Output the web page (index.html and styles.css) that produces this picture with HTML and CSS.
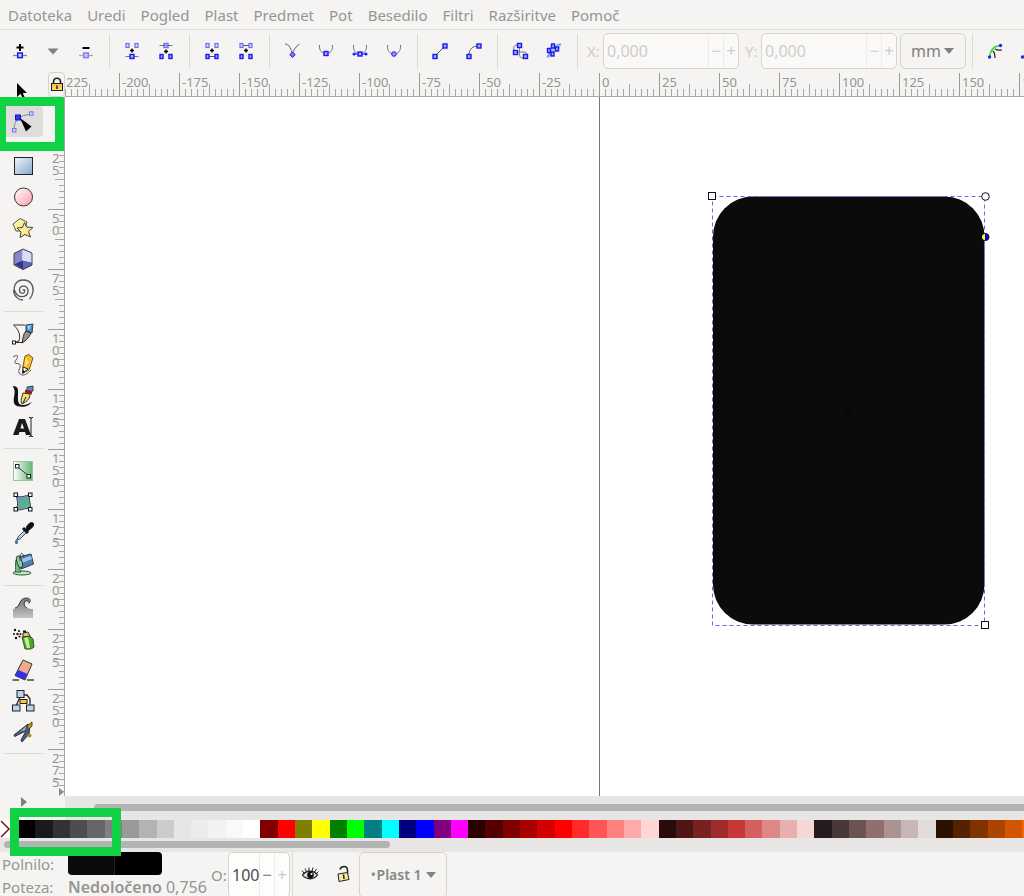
FILE: index.html
```html
<!DOCTYPE html>
<html lang="sl">
<head>
<meta charset="utf-8">
<title>Urejevalnik</title>
<link rel="stylesheet" href="styles.css">
</head>
<body>
<svg class="defs" aria-hidden="true">
  <defs>
    <linearGradient id="g-blue" x1="0" y1="0" x2="1" y2="1"><stop offset="0" stop-color="#eef4fa"/><stop offset="1" stop-color="#86a9cc"/></linearGradient>
    <linearGradient id="g-pink" x1="0" y1="0" x2="1" y2="1"><stop offset="0" stop-color="#fff"/><stop offset="1" stop-color="#ff9aa6"/></linearGradient>
    <linearGradient id="g-green" x1="0" y1="0" x2="1" y2="0"><stop offset="0" stop-color="#fff"/><stop offset="1" stop-color="#5fb572"/></linearGradient>
    <linearGradient id="g-yellow" x1="0" y1="0" x2="1" y2="1"><stop offset="0" stop-color="#fffbd0"/><stop offset="1" stop-color="#f5e052"/></linearGradient>
    <linearGradient id="g-wave" x1="0" y1="0" x2="0" y2="1"><stop offset="0" stop-color="#777"/><stop offset="1" stop-color="#c4c4c4"/></linearGradient>
    <linearGradient id="g-gold" x1="0" y1="0" x2="0" y2="1"><stop offset="0" stop-color="#ffb92a"/><stop offset="1" stop-color="#f7e07a"/></linearGradient>
    <linearGradient id="g-mesh" x1="0" y1="0" x2="1" y2="1"><stop offset="0" stop-color="#7493c4"/><stop offset="1" stop-color="#4fc06a"/></linearGradient>
    <g id="n"><rect x="-2" y="-2" width="4" height="4" fill="#a9a9ff" stroke="#1a1aee" stroke-width="1.4"/></g>
    <g id="nl"><rect x="-1.5" y="-2" width="3" height="4" fill="#d8d8ff" stroke="#6d6df2" stroke-width="1.2"/></g>
    <g id="ns"><rect x="-1.5" y="-2" width="3" height="4" fill="#a9a9ff" stroke="#1a1aee" stroke-width="1.4"/></g>
    <g id="p"><path d="M-2 0H2M0-2V2" stroke="#000" stroke-width="1.4"/></g>
  </defs>
</svg>

<nav class="menubar" aria-label="Meni">
  <button>Datoteka</button><button>Uredi</button><button>Pogled</button><button>Plast</button><button>Predmet</button><button>Pot</button><button>Besedilo</button><button>Filtri</button><button>Razširitve</button><button>Pomoč</button>
</nav>

<div class="toolbar" role="toolbar">
  <button class="tb" aria-label="Vstavi vozlišče"><svg viewBox="0 0 20 20"><path d="M3 14.500H17" stroke="#888" stroke-width="1.300"/><path d="M6.500 6.500H13.500M10 3V10" stroke="#000" stroke-width="2"/><rect x="7.700" y="12" width="4.600" height="4.600" fill="#ccf" stroke="#1a1aee" stroke-width="1.500"/></svg></button>
  <button class="tb narrow" aria-label="Več"><svg viewBox="0 0 20 20"><path d="M4.500 7.500H15.500L10 13.500Z" fill="#7d827f"/></svg></button>
  <button class="tb" aria-label="Izbriši vozlišče"><svg viewBox="0 0 20 20"><path d="M3 14.500H17" stroke="#aaa" stroke-width="1.300"/><path d="M6.500 7H13.500" stroke="#000" stroke-width="2"/><rect x="7.700" y="12" width="4.600" height="4.600" fill="#ccf" stroke="#7f7ff2" stroke-width="1.500"/></svg></button>
  <span class="sep"></span>
  <button class="tb" aria-label="Združi vozlišči"><svg viewBox="0 0 20 20"><path d="M3.500 15.500H16.500" stroke="#777"/><use href="#nl" x="5.500" y="4.500"/><use href="#nl" x="14.500" y="4.500"/><use href="#p" x="10" y="9.500"/><use href="#n" x="10" y="15.500"/></svg></button>
  <button class="tb" aria-label="Prelomi pot"><svg viewBox="0 0 20 20"><path d="M3.500 4.500H16.500" stroke="#777"/><use href="#n" x="10" y="4.500" opacity=".6"/><use href="#p" x="10" y="10.500"/><use href="#ns" x="5.500" y="15.500"/><use href="#ns" x="14.500" y="15.500"/></svg></button>
  <span class="sep"></span>
  <button class="tb" aria-label="Združi z odsekom"><svg viewBox="0 0 20 20"><path d="M5 15.500H15" stroke="#555"/><use href="#nl" x="5.500" y="4.500"/><use href="#nl" x="14.500" y="4.500"/><use href="#p" x="10" y="9.500"/><use href="#ns" x="5.500" y="15.500"/><use href="#ns" x="14.500" y="15.500"/></svg></button>
  <button class="tb" aria-label="Izbriši odsek"><svg viewBox="0 0 20 20"><path d="M5 4.500H15" stroke="#555"/><use href="#nl" x="5.500" y="4.500"/><use href="#nl" x="14.500" y="4.500"/><use href="#p" x="10" y="9.500"/><use href="#ns" x="5.500" y="15.500"/><use href="#ns" x="14.500" y="15.500"/></svg></button>
  <span class="sep"></span>
  <button class="tb" aria-label="Ostro"><svg viewBox="0 0 20 20"><path d="M3 3C8 3 9 9 10.500 13C11 10 14 5 17.500 3" fill="none" stroke="#666"/><path d="M10.500 11L13.200 13.700L10.500 16.400L7.800 13.700Z" fill="#7777ff" stroke="#1a1aee"/></svg></button>
  <button class="tb" aria-label="Gladko"><svg viewBox="0 0 20 20"><path d="M3.500 4C3 10 6 12.500 10 12.500S17 10 16.500 4" fill="none" stroke="#777"/><use href="#n" x="10" y="12.500"/></svg></button>
  <button class="tb" aria-label="Simetrično"><svg viewBox="0 0 20 20"><path d="M3.500 4C3 10 6 13 10 13S17 10 16.500 4" fill="none" stroke="#777"/><path d="M3 13H17" stroke="#1a1aee"/><circle cx="4" cy="13" r="1.500" fill="#1a1aee"/><circle cx="16" cy="13" r="1.500" fill="#1a1aee"/><use href="#n" x="10" y="13"/></svg></button>
  <button class="tb" aria-label="Samodejno gladko"><svg viewBox="0 0 20 20"><path d="M3.500 4C3 10 6 13 10 13S17 10 16.500 4" fill="none" stroke="#777"/><circle cx="10" cy="13" r="2.300" fill="#99f" stroke="#1a1aee"/></svg></button>
  <span class="sep"></span>
  <button class="tb" aria-label="Črta"><svg viewBox="0 0 20 20"><path d="M5 15L15 5" stroke="#555"/><use href="#n" x="5" y="15.500"/><use href="#n" x="15" y="5"/></svg></button>
  <button class="tb" aria-label="Krivulja"><svg viewBox="0 0 20 20"><path d="M5 15C5 8 8 5 15 5" fill="none" stroke="#555"/><use href="#n" x="5" y="15.500"/><use href="#n" x="15" y="5"/></svg></button>
  <span class="sep"></span>
  <button class="tb" aria-label="Predmet v pot"><svg viewBox="0 0 20 20"><path d="M9 4C4 3 2 7 5 11H15C18 12 17 17 15 17H12C8 16 10 10 9.500 5" fill="none" stroke="#777"/><use href="#n" x="9.500" y="4.500"/><use href="#n" x="5.500" y="11.500"/><use href="#n" x="15.500" y="15.500"/></svg></button>
  <button class="tb" aria-label="Poteza v pot"><svg viewBox="0 0 20 20"><path d="M3 17L5 8L8 3L17 4L15 9L12 11L8 13L5 17Z" fill="#a9c8f0"/><path d="M3 16L7 11M13 4L17 3" stroke="#6f9de0" stroke-width="1.500"/><use href="#ns" x="9" y="5"/><use href="#ns" x="5" y="9.500"/><use href="#ns" x="13" y="8"/><use href="#ns" x="8.500" y="13"/></svg></button>
  <span class="sep"></span>
  <label class="coord" for="cx">X:</label>
  <div class="spin"><input id="cx" value="0,000" disabled><button disabled aria-label="Zmanjšaj X">−</button><button disabled aria-label="Povečaj X">+</button></div>
  <label class="coord" for="cy">Y:</label>
  <div class="spin"><input id="cy" value="0,000" disabled><button disabled aria-label="Zmanjšaj Y">−</button><button disabled aria-label="Povečaj Y">+</button></div>
  <div class="unit"><select aria-label="Enota"><option>mm</option></select><svg viewBox="0 0 12 8"><path d="M1 1H11L6 7Z" fill="#7d827f"/></svg></div>
  <span class="sep"></span>
  <button class="tb" aria-label="Uredi odrezno pot"><svg viewBox="0 0 20 20"><path d="M5 16C5 9 9 5 16 4.500" fill="none" stroke="#2fe02f" stroke-width="1.600"/><path d="M8 10C10 12 10 14 10 17M10 8C13 10 15 9 17 9" fill="none" stroke="#222" stroke-width="1.200"/><circle cx="4.500" cy="16" r="1.700" fill="#22f"/><circle cx="15.500" cy="4.500" r="1.700" fill="#22f"/></svg></button>
  <button class="tb" aria-label="Uredi masko"><svg viewBox="0 0 20 20"><path d="M5 16C5 9 9 5 16 4.500" fill="none" stroke="#2fe02f"/><circle cx="3.500" cy="16" r="1.700" fill="#22f"/></svg></button>
</div>

<main class="workspace">
  <div class="toolbox" role="toolbar" aria-label="Orodja">
    <button class="tool" aria-label="Izberi"><svg viewBox="0 0 24 24"><path d="M6 4V18L9.500 14.800L12 20L14 19L11.800 14H16Z" fill="#000"/></svg></button>
    <button class="tool active" aria-label="Vozlišča"><svg viewBox="0 0 24 24"><path d="M3 20C3 10 9 4.500 20 4.500" fill="none" stroke="#888"/><rect x="1.500" y="18.500" width="3.500" height="3.500" fill="#ccf" stroke="#7777f5"/><rect x="18.500" y="1.800" width="3.500" height="3.500" fill="#ccf" stroke="#7777f5"/><rect x="4.500" y="5" width="5" height="5" fill="#33f" stroke="#1111d8"/><path d="M9 8L20.500 16.500L15 21.500Z" fill="#000"/></svg></button>
    <span class="hsep"></span>
    <button class="tool" aria-label="Pravokotnik"><svg viewBox="0 0 24 24"><rect x="3.500" y="3.500" width="18" height="17" fill="url(#g-blue)" stroke="#222"/></svg></button>
    <button class="tool" aria-label="Elipsa"><svg viewBox="0 0 24 24"><circle cx="12.500" cy="12" r="9" fill="url(#g-pink)" stroke="#333"/></svg></button>
    <button class="tool" aria-label="Zvezda"><svg viewBox="0 0 24 24"><path d="M2 8L9 2.500L16 6L13.500 15L5 15Z" fill="url(#g-yellow)" stroke="#555"/><path d="M13.500 6.500L15.500 11L22 11.500L17.500 15.500L19.500 21L14 18.500L9 21.500L10 16L6 12L11.500 11.500Z" fill="url(#g-yellow)" stroke="#444"/></svg></button>
    <button class="tool" aria-label="Kvader"><svg viewBox="0 0 24 24"><path d="M3 6L12 2L21 6V18L12 23L3 18Z" fill="#aeb0e6"/><path d="M12 3L21 6.500V16L11 13.500Z" fill="#dcdcf8"/><path d="M3 17L11 13.500L21 16V18L12 22.500Z" fill="#34348f"/><path d="M3 6L11 3V13.500L3 17.500Z" fill="#8587ca"/><path d="M12 14V22.500L21 18V16Z" fill="#6264ba"/><path d="M3 6.500L12 2L21 6V18L12 22.500L3 18Z" fill="none" stroke="#444"/></svg></button>
    <button class="tool" aria-label="Spirala"><svg viewBox="0 0 24 24"><path d="M12 12.500C12.500 10.500 14.500 12 13.500 14C12 16.500 8 15 8.500 11.500C9 7 16 7 17 12C18 18 10.500 20.500 6.500 17C0 11 4 2 12.500 2C19.500 2 23 8 22 13.500C21.500 17 20 19.500 18.500 21M12 22C8 22 3 19 2.500 12" fill="none" stroke="#555" stroke-width="1.300"/></svg></button>
    <span class="hsep"></span>
    <button class="tool" aria-label="Pero"><svg viewBox="0 0 24 24"><path d="M14 3H2.500C7 7 10 12 8 19L4 20.500H12" fill="none" stroke="#333"/><rect x="1.500" y="19" width="3" height="3" fill="#fff" stroke="#222"/><path d="M15 3L22 2L21 11L15 9Z" fill="#4c89b8" stroke="#26475f"/><path d="M16 4L20 3L18 9Z" fill="#9ed0ed"/><path d="M15 9L20 11C18 15 16 18 11 21C12 17 12 12 15 9Z" fill="#9c948a" stroke="#222"/></svg></button>
    <button class="tool" aria-label="Svinčnik"><svg viewBox="0 0 24 24"><path d="M2 4C7 1 8 3 5 7C2 11 5 10 8 11C12 12 5 19 9 21C13 24 17 20 20 17" fill="none" stroke="#555"/><path d="M14 3L18 1.500L22 5L18 17L12 20V13Z" fill="#f7b927" stroke="#7c5c1b"/><path d="M14.500 5L14 14L18 9Z" fill="#ffe98c"/><path d="M12 14L17 16L12 20Z" fill="#fff" stroke="#222"/><path d="M12 17L14 19L11 21Z" fill="#111"/></svg></button>
    <button class="tool" aria-label="Kaligrafija"><svg viewBox="0 0 24 24"><path d="M1.500 2C7 2 7.500 5 7 11C6.500 19 8 21 12 21C16 21 18 19 21 18C17 23 13 23 9 22.500C2 22 2 18 3.500 10C4 6 3 4 1.500 2Z" fill="#111"/><path d="M16 3L22 2V7L16 7Z" fill="#5992bd" stroke="#29485f"/><path d="M14 7L21 9" stroke="#9f1616" stroke-width="3"/><path d="M12 9L19 10C19 14 17 17 11 20C9 17 11 13 12 9Z" fill="#f2dc7b" stroke="#332d16"/><path d="M12 19L15 13" stroke="#222"/></svg></button>
    <button class="tool" aria-label="Besedilo"><svg viewBox="0 0 24 24"><path d="M2 20L8 4H14L20 20H15L14 17H8.500L7.500 20ZM9.500 13.500H13L11 8Z" fill="#1b1b1b" fill-rule="evenodd"/><path d="M18 2.500H19.500L20 3.500L20.500 2.500H22M20 3V20M18 21.500H19.500L20 20L20.500 21.500H22" fill="none" stroke="#222"/></svg></button>
    <span class="hsep"></span>
    <button class="tool" aria-label="Preliv"><svg viewBox="0 0 24 24"><rect x="2.500" y="2.500" width="19" height="19" fill="url(#g-green)" stroke="#93c79d"/><path d="M6 7.500L18 17" stroke="#333"/><rect x="4.500" y="5.500" width="3.500" height="3.500" fill="#fff" stroke="#222"/><rect x="16" y="15.500" width="3.500" height="3.500" fill="#dfd" stroke="#222"/></svg></button>
    <button class="tool" aria-label="Mreža"><svg viewBox="0 0 24 24"><path d="M5 5C10 9 14 5 19 5C17 11 21 15 19 19C14 17 9 22 5 19C8 14 6 10 5 5Z" fill="url(#g-mesh)" stroke="#446"/><g fill="#fff" stroke="#111"><rect x="3" y="3" width="3.500" height="3.500"/><rect x="17.500" y="3" width="3.500" height="3.500"/><rect x="3" y="17.500" width="3.500" height="3.500"/><rect x="17.500" y="17.500" width="3.500" height="3.500"/></g></svg></button>
    <button class="tool" aria-label="Kapalka"><svg viewBox="0 0 24 24"><path d="M15 8L17 10L9 18L6 19L7 16Z" fill="#b6d6ec" stroke="#445"/><path d="M12 7L17 12" stroke="#111" stroke-width="3"/><path d="M15 8C16 2 22 0 22.500 3C23 6 19 8 17 10Z" fill="#111" stroke="#111"/><path d="M5.500 18C3 21 4 23 5.500 23S8 21 5.500 18Z" fill="#4375a9"/></svg></button>
    <button class="tool" aria-label="Vedro"><svg viewBox="0 0 24 24"><ellipse cx="11" cy="21" rx="9" ry="2" fill="#bde8c3" stroke="#285c36"/><path d="M5 8C4 12 5 17 4.500 20H10C8 17 8 14 9 12Z" fill="#73c384" stroke="#27613b"/><path d="M7 5L20 2L22.500 12L10 17Z" fill="#4e83ae" stroke="#233f57"/><path d="M10 7L20 4L21 7L11 11Z" fill="#9cc6e4"/><ellipse cx="8.500" cy="10" rx="2.500" ry="6" transform="rotate(-18 8 10)" fill="#8dcea0" stroke="#333"/><path d="M9 9C8 0 12 -1 13 6" fill="none" stroke="#444"/></svg></button>
    <span class="hsep"></span>
    <button class="tool" aria-label="Popravi"><svg viewBox="0 0 24 24"><path d="M2 13C9 12 7 2 15 2C21 2 20 8 17 8C18 5 14 4 14 8C14 12 18 13 22 13V22H2Z" fill="url(#g-wave)"/><path d="M4 12C10 11 8 2 15 2C20 2 20 5 18 7M17 5C12 3 12 11 16 12" fill="none" stroke="#444"/></svg></button>
    <button class="tool" aria-label="Razpršilo"><svg viewBox="0 0 24 24"><path d="M11 10L19 9L22 12L23 20C20 23 17 22 14 22Z" fill="#4da32e" stroke="#315c22"/><path d="M13 11L17 10L19 21H16Z" fill="#c4ef91"/><path d="M12 6L17 5L19 9L12 10Z" fill="#efc064" stroke="#333"/><path d="M12 3.500H15V5.500H12Z" fill="#111"/><g fill="#111"><circle cx="4" cy="3" r="1.200"/><circle cx="8" cy="4" r="1"/><circle cx="3" cy="7" r="1"/><circle cx="6.500" cy="7" r="1.200"/><circle cx="9.500" cy="7" r="1"/><circle cx="5" cy="11" r="1.200"/><circle cx="8.500" cy="9.500" r="1"/></g></svg></button>
    <button class="tool" aria-label="Radirka"><svg viewBox="0 0 24 24"><path d="M12 2L21 6L14 22L4 17.500Z" fill="#efa98b" stroke="#333"/><path d="M7.500 12L16.500 16L13.500 21.500L4 17.500Z" fill="#3030ed"/><path d="M1.500 22H8M16 22H23" stroke="#444" stroke-width="1.300"/></svg></button>
    <button class="tool" aria-label="Povezovalnik"><svg viewBox="0 0 24 24"><path d="M9 8L5 17M13 6H16L19 10V17" fill="none" stroke="#222" stroke-width="1.300"/><g fill="#bcd3ee" stroke="#222"><rect x="6" y="1.500" width="7" height="7"/><rect x="1.500" y="16" width="7.500" height="6"/><rect x="15.500" y="16" width="7.500" height="6"/></g><rect x="9" y="10.500" width="7" height="4" fill="#ffc928" stroke="#222"/></svg></button>
    <button class="tool" aria-label="Meritve"><svg viewBox="0 0 24 24"><path d="M17 4L3 15L3.500 16.500L15 11L10 20L11 22L18 14L19 6Z" fill="#455f78" stroke="#29333e"/><path d="M15 6L9 12L14 10Z" fill="#9fb4c4"/><path d="M21 2L16 6L18 9L21 6Z" fill="#c7952b" stroke="#5b451a"/><circle cx="18.500" cy="15.500" r="2" fill="#b38f2c"/></svg></button>
    <span class="hsep"></span>
    <button class="expander" aria-label="Več orodij"><svg viewBox="0 0 8 12"><path d="M1 1V11L7 6Z" fill="#7d827f"/></svg></button>
  </div>

  <section class="view">
    <button class="corner" aria-label="Zakleni vodila"><svg viewBox="0 0 16 16"><path d="M4.500 8V5C4.500 0 11.500 0 11.500 5V8" fill="none" stroke="#222" stroke-width="1.600"/><rect x="2.500" y="6.500" width="11" height="7" fill="url(#g-gold)" stroke="#222"/><path d="M8 8.500V12" stroke="#222" stroke-width="1.500"/></svg></button>
    <div class="ruler-h" id="ruler-h"></div>
    <div class="ruler-v" id="ruler-v"><svg class="pointer" viewBox="0 0 5 8"><path d="M0 0V8L5 4Z" fill="#8a8d8a"/></svg></div>
    <svg class="canvas" role="img" aria-label="Risalna površina">
      <path d="M534.500 0V2000" stroke="#777"/>
      <rect x="648" y="99.500" width="271.500" height="428" rx="40" fill="#0b0b0b"/>
      <rect x="647.500" y="99.500" width="272" height="429" fill="none" stroke="#6a6ae6" stroke-dasharray="4 3"/>
      <path d="M779 309L788 318M788 309L779 318" stroke="#000"/>
      <rect x="643.500" y="95.500" width="7" height="7" fill="#fff" stroke="#111"/>
      <rect x="916.500" y="524.500" width="7" height="7" fill="#fff" stroke="#111"/>
      <circle cx="920.500" cy="99.500" r="3.800" fill="#fff" stroke="#111"/>
      <circle cx="920.500" cy="140" r="3.500" fill="#00f" stroke="#111"/>
      <path d="M920 137A3 3 0 0 0 920 143Z" fill="#ff0"/>
    </svg>
    <div class="scroll-h"><div class="thumb"></div></div>
  </section>
</main>

<section class="palette" aria-label="Barve">
  <button class="none" aria-label="Brez"><svg viewBox="0 0 18 18"><path d="M1 1L9 9L1 17" fill="none" stroke="#7d1414" stroke-width="1.500"/></svg></button>
  <div class="swatches" id="swatches"></div>
</section>
<div class="palette-scroll"><div class="thumb"></div></div>

<footer class="status">
  <div class="style">
    <span>Polnilo:</span><button class="fill" aria-label="Barva polnila"></button>
    <span>Poteza:</span><span class="stroke"><b>Nedoločeno</b> 0,756</span>
  </div>
  <label class="opacity" for="op">O:</label>
  <div class="spin small"><input id="op" value="100"><button class="minus" aria-label="Zmanjšaj">−</button><button disabled aria-label="Povečaj">+</button></div>
  <span class="vline"></span>
  <button class="si" aria-label="Vidnost"><svg viewBox="0 0 18 18"><path d="M1.500 10C5 5 13 5 16.500 10C13 15 5 15 1.500 10Z" fill="#ddd" stroke="#222" stroke-width="1.300"/><circle cx="9.500" cy="10" r="3.300" fill="#111"/><circle cx="10.500" cy="9" r="1" fill="#fff"/><path d="M3 8L1 5.500M5.500 6.500L4 3.500M8 6V2.500M11 6L12 2.500M13.500 7L15.500 4M15.500 8.500L17.500 6.500" stroke="#222"/></svg></button>
  <button class="si" aria-label="Zakleni plast"><svg viewBox="0 0 18 18"><path d="M13.500 9V5C13.500 0 7 1 6 4.500" fill="none" stroke="#222" stroke-width="1.500"/><path d="M4 9L13.500 7.500L15 14.500L5 16.500Z" fill="#f4e7a0" stroke="#222"/><path d="M9.500 9.500L10 14" stroke="#222" stroke-width="1.500"/></svg></button>
  <button class="layer"><span class="dot">•</span>Plast 1<svg viewBox="0 0 12 8"><path d="M1 1H11L6 7Z" fill="#7d827f"/></svg></button>
</footer>

<div class="mark mark-tool"></div>
<div class="mark mark-palette"></div>
<script src="app.js"></script>
</body>
</html>
```

FILE: styles.css
```css
* { box-sizing: border-box; }
body {
  margin: 0; height: 100vh; overflow: hidden; position: relative;
  display: flex; flex-direction: column;
  background: #f5f4f2; color: #949693;
  font: 15px/20px "Noto Sans", "Open Sans", sans-serif;
}
button, input, select { font: inherit; color: inherit; background: none; border: 0; padding: 0; margin: 0; }
svg { display: block; flex: none; }
.defs { position: absolute; width: 0; height: 0; }

.menubar { display: flex; gap: 15px; flex: none; height: 30px; padding: 1px 8px; border-bottom: 1px solid #dfddda; white-space: nowrap; }

.toolbar { display: flex; align-items: center; flex: none; height: 42px; padding-left: 3px; overflow: hidden; }
.tb { width: 34px; height: 34px; flex: none; display: grid; place-items: center; }
.tb svg { width: 20px; height: 20px; }
.tb.narrow { width: 32px; }
.sep { width: 1px; height: 35px; margin: 0 5px 0 6px; background: #dcdad7; flex: none; }
.coord { width: 20px; padding-left: 4px; flex: none; color: #cfcdca; }
.spin { display: flex; width: 136px; height: 36px; flex: none; border: 1px solid #d6d2ce; border-radius: 5px; background: #faf9f8; color: #cfcdca; overflow: hidden; }
.spin input { flex: 1; min-width: 0; padding-left: 3px; font-size: 16px; }
.spin button { width: 15px; border-left: 1px solid #eeecea; font-size: 17px; }
.spin + .coord { width: 22px; padding-left: 6px; }
.unit { position: relative; display: flex; align-items: center; width: 66px; height: 36px; margin-left: 3px; flex: none; border: 1px solid #d6d2ce; border-radius: 5px; }
.unit select { appearance: none; width: 100%; height: 100%; padding-left: 10px; color: #7d807d; font-size: 16px; }
.unit svg { position: absolute; right: 10px; width: 12px; height: 8px; pointer-events: none; }

.workspace { flex: 1; min-height: 0; display: flex; }
.toolbox { width: 48px; flex: none; display: flex; flex-direction: column; padding: 3px 5px 12px 4px; }
.tool { height: 31px; display: grid; place-items: center; padding-right: 2px; border-radius: 4px; flex: none; }
.tool svg { width: 24px; height: 24px; }
.tool.active { background: #dfdddb; }
.hsep { height: 1px; margin: 6px 0; background: #dcdad7; flex: none; }
.expander { margin-top: auto; height: 12px; display: grid; place-items: center; }
.expander svg { width: 8px; height: 12px; }

.view { flex: 1; min-width: 0; display: grid; grid-template-columns: 17px minmax(0, 1fr); grid-template-rows: 25px minmax(0, 1fr) 24px; }
.corner { display: grid; place-items: center; border: 1px solid #d6d2ce; border-radius: 4px; }
.corner svg { width: 16px; height: 16px; }
.ruler-h { display: flex; overflow: hidden; border-bottom: 1px solid #a5a7a5; padding-top: 1px; }
.ruler-v { position: relative; overflow: hidden; border-right: 1px solid #a5a7a5; }
.pointer { position: absolute; right: 0; bottom: 0; width: 5px; height: 8px; }
.ruler-h .cell {
  width: 60px; flex: none; padding: 0 0 0 2px; border-left: 1px solid #999b99;
  font-size: 13px; line-height: 18px;
  background: linear-gradient(#a5a7a5, #a5a7a5) 29px 100% / 1px 12px no-repeat,
    repeating-linear-gradient(to right, transparent 0 5px, #a5a7a5 5px 6px) 0 100% / 100% 7px no-repeat;
}
.ruler-h .cell:first-child { margin-left: -6px; padding-left: 6px; }
.ruler-v .cell {
  height: 60px; padding: 2px 0 0 4px; border-top: 1px solid #999b99;
  font-size: 13px; line-height: 12px;
  background: linear-gradient(#a5a7a5, #a5a7a5) 100% 29px / 9px 1px no-repeat,
    repeating-linear-gradient(to bottom, transparent 0 5px, #a5a7a5 5px 6px) 100% 0 / 5px 100% no-repeat;
}
.ruler-v .offset { height: 52px; border-top: 0; background-position: 100% 21px, 100% 100%; }
.ruler-v .cell span { display: block; }
.canvas { width: 100%; height: 100%; background: #fff; overflow: hidden; }
.scroll-h { grid-column: 2; background: #e8e6e4; padding: 8px 0 0 29px; }
.thumb { height: 7px; background: #b1b4b1; border-radius: 4px; }
.scroll-h .thumb { border-radius: 4px 0 0 4px; }

.palette { display: flex; flex: none; height: 18px; overflow: hidden; }
.none { width: 18px; flex: none; background: #fff; }
.none svg { width: 18px; height: 18px; }
.swatches { display: flex; flex: none; width: calc(100% - 3px); }
.swatches button { flex: 1 1 0; min-width: 0; }
.palette-scroll { flex: none; height: 14px; padding: 3px 4px; background: #e8e6e4; }
.palette-scroll .thumb { width: 38%; }

.status { display: flex; flex: none; height: 44px; overflow: hidden; }
.style { display: grid; grid-template-columns: 66px 143px; grid-template-rows: 23px 23px; align-items: center; padding-left: 2px; flex: none; white-space: nowrap; }
.stroke { font-size: 16px; }
.stroke b { font-weight: 600; }
.fill { width: 94px; height: 23px; border-radius: 4px; background: linear-gradient(to right, #0b0b0b 46px, #222 46px 47px, #000 47px); }
.opacity { width: 17px; padding-top: 13px; flex: none; }
.spin.small { width: 62px; height: 46px; background: #fdfdfc; }
.spin.small input { color: #4a4c4a; }
.spin.small .minus { color: #6e706e; }
.vline { width: 1px; margin-left: 2px; background: #dcdad7; }
.si { width: 33px; height: 44px; display: grid; place-items: center; flex: none; }
.si svg { width: 18px; height: 18px; }
.layer { display: flex; align-items: center; width: 88px; height: 46px; padding-left: 11px; border: 1px solid #d6d2ce; border-radius: 5px; font-weight: 600; font-size: 14px; color: #858885; white-space: nowrap; }
.layer .dot { font-size: 12px; margin-right: 1px; }
.layer svg { width: 12px; height: 8px; margin-left: 3px; }

.mark { position: absolute; border: 9px solid #11d145; pointer-events: none; }
.mark-tool { left: 0; top: 97px; width: 64px; height: 54px; border-left-width: 6px; }
.mark-palette { left: 10px; top: 808px; width: 111px; height: 48px; }
```

FILE: app.js
```js
const colours = `000000 1a1a1a 333333 4d4d4d 666666 808080 999999 b3b3b3 cccccc e6e6e6 ececec f2f2f2 f9f9f9 ffffff
800000 ff0000 808000 ffff00 008000 00ff00 008080 00ffff 000080 0000ff 800080 ff00ff
2b0000 550000 800000 aa0000 d40000 ff0000 ff2a2a ff5555 ff8080 ffaaaa ffd5d5
280b0b 501616 782121 a02c2c c83737 d35f5f de8787 e9afaf f4d7d7
241c1c 483737 6c5353 916f6f ac9393 c8b7b7 e3dbdb
2b1100 552200 803300 aa4400 d45500 ff6600`.split(/\s+/);

const swatches = document.getElementById('swatches');
for (const c of colours) {
  const b = document.createElement('button');
  b.style.background = '#' + c;
  b.setAttribute('aria-label', '#' + c);
  swatches.append(b);
}

const rulerH = document.getElementById('ruler-h');
for (let v = -225; v <= 175; v += 25) {
  const cell = document.createElement('div');
  cell.className = 'cell';
  cell.textContent = v === -225 ? '225' : v;
  rulerH.append(cell);
}

// The ruler starts a little past its zero mark.
const rulerV = document.getElementById('ruler-v');
const offset = document.createElement('div');
offset.className = 'cell offset';
rulerV.append(offset);
for (let v = 25; v <= 275; v += 25) {
  const cell = document.createElement('div');
  cell.className = 'cell';
  for (const d of String(v)) {
    const s = document.createElement('span');
    s.textContent = d;
    cell.append(s);
  }
  rulerV.append(cell);
}
```
